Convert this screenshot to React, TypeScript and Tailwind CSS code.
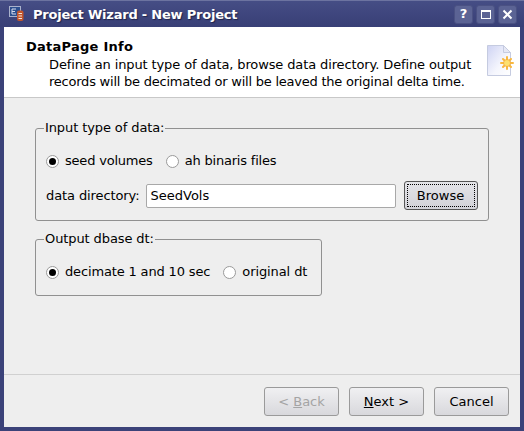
import { ReactNode } from 'react';

function AppIcon() {
  return (
    <svg width="16" height="16" viewBox="0 0 16 16" className="shrink-0">
      <rect x="0.500" y="0.500" width="11" height="10" fill="#2c4f8f" stroke="#aab2cc" />
      <path d="M3 3h4M3 3v5M3 5.500h3M3 8h4" stroke="#d5daea" strokeWidth="1" fill="none" />
      <rect x="8" y="4.500" width="6.500" height="10.500" rx="2" fill="#c2552c" />
      <path d="M9.500 7.500h3.500M9.500 10h3.500M9.500 12.500h3.500" stroke="#f2e6dc" strokeWidth="1.200" />
    </svg>
  );
}

function WinButton({ children }: { children: ReactNode }) {
  return (
    <div className="w-[19px] h-[19px] rounded-[3px] bg-[#5b6394] border border-[#4a5183] flex items-center justify-center text-white">
      {children}
    </div>
  );
}

function PageIcon() {
  return (
    <svg width="30" height="34" viewBox="0 0 30 34" className="shrink-0">
      <defs>
        <linearGradient id="pg" x1="0" y1="0" x2="1" y2="1">
          <stop offset="0" stopColor="#ced3f3" />
          <stop offset="0.6" stopColor="#f5f6fd" />
          <stop offset="1" stopColor="#ffffff" />
        </linearGradient>
      </defs>
      <path d="M2.500 0.500h16l7 7v23h-23z" fill="url(#pg)" stroke="#c5cbe0" />
      <path d="M18.500 0.500v7h7z" fill="#e6e8f5" stroke="#c5cbe0" />
      <g stroke="#f8b840" strokeWidth="2" strokeLinecap="round">
        <path d="M22 12v12M16 18h12M18 14l8 8M26 14l-8 8" />
      </g>
      <circle cx="22" cy="18" r="3.500" fill="#fde070" stroke="#f3a83a" strokeWidth="0.800" />
    </svg>
  );
}

function Radio({ checked, label, tracking }: { checked?: boolean; label: string; tracking: string }) {
  return (
    <div className="flex items-center gap-[6px] whitespace-nowrap">
      <span className="w-[13px] h-[13px] rounded-full border border-[#9a9a9a] bg-white flex items-center justify-center">
        {checked && <span className="w-[7px] h-[7px] rounded-full bg-black" />}
      </span>
      <span className={tracking}>{label}</span>
    </div>
  );
}

function PushButton({ children, disabled, focused, className }: { children: ReactNode; disabled?: boolean; focused?: boolean; className: string }) {
  return (
    <button
      className={
        'h-[29px] rounded-[3px] border bg-linear-to-b flex items-center justify-center whitespace-nowrap shrink-0 ' +
        (focused ? 'border-[#555555] from-[#e4e4e8] to-[#d2d2d8] ' : 'border-[#9a9a9a] from-[#f0f0f2] to-[#d8d8dc] ') +
        (disabled ? 'text-[#a4a4a4] ' : 'text-black ') +
        className
      }
    >
      {focused ? (
        <span className="w-[calc(100%-4px)] h-[calc(100%-4px)] border border-dotted border-black flex items-center justify-center">
          {children}
        </span>
      ) : (
        children
      )}
    </button>
  );
}

export default function App() {
  return (
    <div className="w-[524px] h-[431px] flex flex-col bg-[#3b4279] font-['DejaVu_Sans',sans-serif] text-[13px] leading-[16px] text-black overflow-hidden">
      {/* Title bar */}
      <div className="h-[27px] shrink-0 flex items-center pl-[9px] pr-[7px] bg-linear-to-b from-[#454d85] to-[#383f76] border-t border-[#6c73a0]">
        <AppIcon />
        <span className="ml-[8px] mt-[2px] text-white font-bold tracking-[-0.21px] [text-shadow:1px_1px_1px_#20244a]">Project Wizard - New Project</span>
        <div className="ml-auto flex gap-[3px]">
          <WinButton><span className="font-bold text-[13px]">?</span></WinButton>
          <WinButton><span className="w-[10px] h-[9px] border border-white border-t-2" /></WinButton>
          <WinButton>
            <svg width="11" height="11" viewBox="0 0 11 11"><path d="M1.500 1.500l8 8M9.500 1.500l-8 8" stroke="#fff" strokeWidth="2" /></svg>
          </WinButton>
        </div>
      </div>

      {/* Client area */}
      <div className="flex-1 mx-[4px] mb-[4px] bg-[#eeeeee] flex flex-col min-h-0">
        <div className="h-[71px] shrink-0 bg-white border-b border-[#c8c8c8] pl-[22px] pr-[5px] pt-[12px] flex">
          <div className="flex-1 whitespace-nowrap">
            <div className="font-bold tracking-[0.25px]">DataPage Info</div>
            <div className="pl-[23px] mt-[1px] leading-[17px]">
              <div className="tracking-[-0.12px]">Define an input type of data, browse data directory. Define output</div>
              <div className="tracking-[-0.23px]">records will be decimated or will be leaved the original delta time.</div>
            </div>
          </div>
          <div className="pt-[6px]"><PageIcon /></div>
        </div>

        <div className="flex-1 flex flex-col px-[31px] pt-[22px] min-h-0">
          <fieldset className="border border-[#909090] rounded-[3px] px-[10px] h-[101px] w-[454px]">
            <legend className="px-[1px] ml-[-2px] tracking-[-0.1px]">Input type of data:</legend>
            <div className="flex gap-[13px] mt-[17px]">
              <Radio checked label="seed volumes" tracking="tracking-[-0.2px]" />
              <Radio label="ah binaris files" tracking="tracking-[-0.2px]" />
            </div>
            <div className="flex items-center mt-[12px] whitespace-nowrap">
              <span className="tracking-[-0.1px]">data directory:</span>
              <div className="ml-[6px] w-[250px] h-[24px] rounded-[2px] border border-[#a8a8a8] bg-white pl-[4px] flex items-center">SeedVols</div>
              <PushButton focused className="ml-[8px] w-[74px]">Browse</PushButton>
            </div>
          </fieldset>

          <fieldset className="mt-[10px] border border-[#909090] rounded-[3px] px-[10px] h-[65px] w-[287px]">
            <legend className="px-[1px] ml-[-2px] tracking-[-0.1px]">Output dbase dt:</legend>
            <div className="flex gap-[13px] mt-[17px]">
              <Radio checked label="decimate 1 and 10 sec" tracking="tracking-[-0.15px]" />
              <Radio label="original dt" tracking="tracking-[-0.1px]" />
            </div>
          </fieldset>
        </div>

        <div className="h-[53px] shrink-0 border-t border-[#d0d0d0] flex justify-end gap-[10px] pt-[12px] pr-[11px]">
          <PushButton disabled className="w-[75px]"><span>&lt; <u>B</u>ack</span></PushButton>
          <PushButton className="w-[75px]"><span><u>N</u>ext &gt;</span></PushButton>
          <PushButton className="w-[75px]">Cancel</PushButton>
        </div>
      </div>
    </div>
  );
}
